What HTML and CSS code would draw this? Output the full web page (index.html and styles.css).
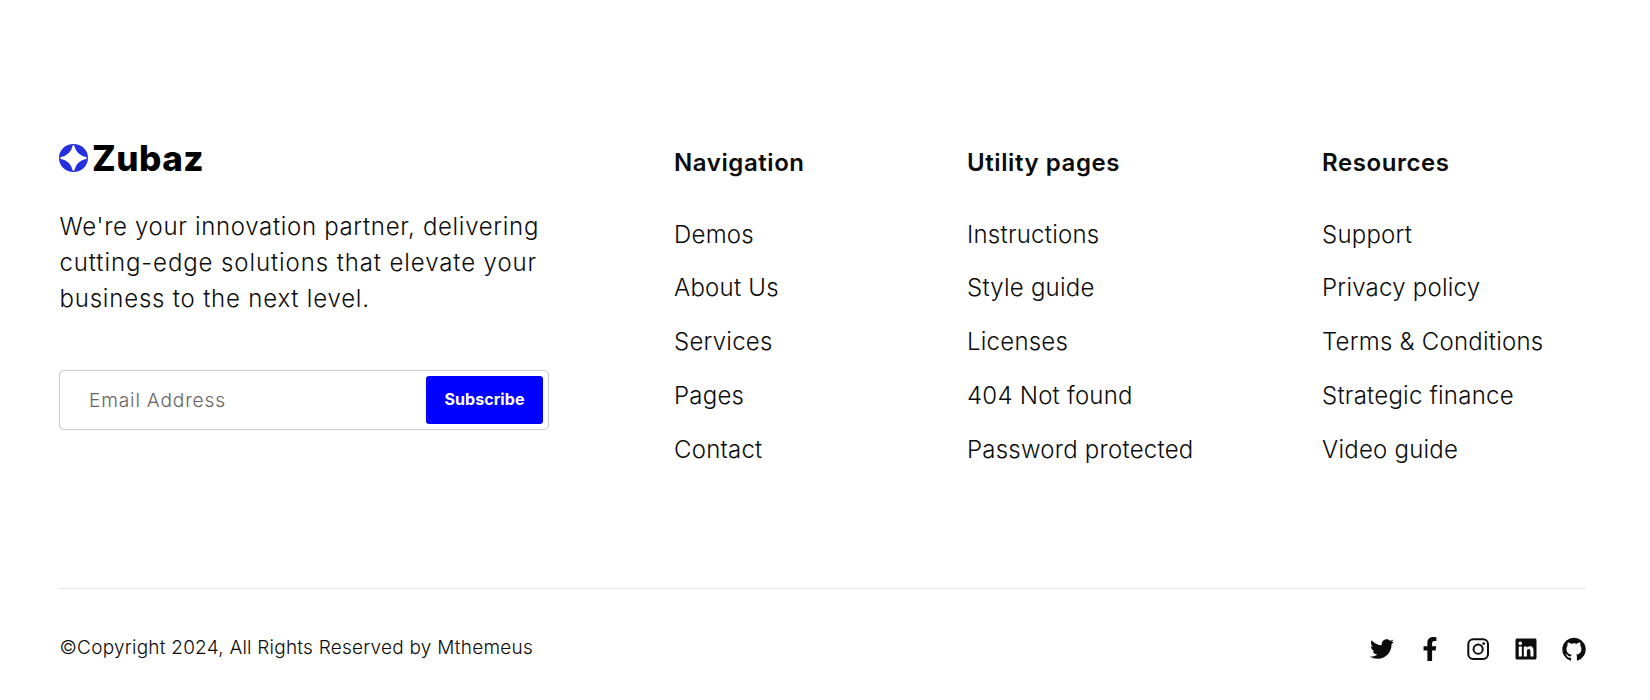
FILE: index.html
```html
<!DOCTYPE html>
<html lang="en">
<head>
<meta charset="utf-8">
<title>Zubaz</title>
<link rel="stylesheet" href="styles.css">
</head>
<body>
<footer class="footer">
  <div class="footer-top">
    <div class="about">
      <a class="brand">
        <svg class="brand-mark" viewBox="0 0 29 28"><ellipse cx="14.5" cy="14" rx="14.5" ry="14" fill="#2430de"/><path d="M14.5 1.500C16 8 20 12.500 27.500 14C20 15.500 16 20 14.500 26.500C13 20 9 15.500 1.500 14C9 12.500 13 8 14.500 1.500Z" fill="#fff" stroke="#fff" stroke-width="1.300"/></svg>
        <span class="brand-name">Zubaz</span>
      </a>
      <p class="intro"><span class="line-a">We're your innovation partner, delivering</span><br><span class="line-b">cutting-edge solutions that elevate your</span><br>business to the next level.</p>
      <form class="subscribe">
        <input class="email" type="email" placeholder="Email Address">
        <button class="submit" type="button">Subscribe</button>
      </form>
    </div>
    <nav class="col col-nav">
      <h2 class="col-title">Navigation</h2>
      <ul class="links"><li>Demos</li><li>About Us</li><li>Services</li><li>Pages</li><li>Contact</li></ul>
    </nav>
    <nav class="col col-utility">
      <h2 class="col-title">Utility pages</h2>
      <ul class="links"><li>Instructions</li><li>Style guide</li><li>Licenses</li><li>404 Not found</li><li>Password protected</li></ul>
    </nav>
    <nav class="col">
      <h2 class="col-title">Resources</h2>
      <ul class="links"><li>Support</li><li>Privacy policy</li><li>Terms &amp; Conditions</li><li>Strategic finance</li><li>Video guide</li></ul>
    </nav>
  </div>
  <div class="footer-bottom">
    <p class="copyright">©Copyright 2024, All Rights Reserved by Mthemeus</p>
    <div class="social">
      <svg class="icon" viewBox="0 0 512 512"><path d="M459.370 151.716c.325 4.548.325 9.097.325 13.645 0 138.720-105.583 298.558-298.558 298.558-59.452 0-114.680-17.219-161.137-47.106 8.447.974 16.568 1.299 25.340 1.299 49.055 0 94.213-16.568 130.274-44.832-46.132-.975-84.792-31.188-98.112-72.772 6.498.974 12.995 1.624 19.818 1.624 9.421 0 18.843-1.300 27.614-3.573-48.081-9.747-84.143-51.980-84.143-102.985v-1.299c13.969 7.797 30.214 12.670 47.431 13.319-28.264-18.843-46.781-51.005-46.781-87.391 0-19.492 5.197-37.360 14.294-52.954 51.655 63.675 129.300 105.258 216.365 109.807-1.624-7.797-2.599-15.918-2.599-24.040 0-57.828 46.782-104.934 104.934-104.934 30.213 0 57.502 12.670 76.670 33.137 23.715-4.548 46.456-13.320 66.599-25.340-7.798 24.366-24.366 44.833-46.132 57.827 21.117-2.273 41.584-8.122 60.426-16.243-14.292 20.791-32.161 39.308-52.628 54.253z"/></svg>
      <svg class="icon" viewBox="0 0 320 512"><path d="M279.140 288l14.220-92.660h-88.910v-60.130c0-25.350 12.420-50.060 52.240-50.060h40.420V6.260S260.430 0 225.360 0c-73.220 0-121.080 44.380-121.080 124.720v70.620H22.890V288h81.390v224h100.170V288z"/></svg>
      <svg class="icon" viewBox="0 0 24 24"><g fill="none" stroke="#0c0c0c" stroke-width="2"><rect x="2.300" y="2.300" width="19.700" height="19.700" rx="5"/><circle cx="12.150" cy="12.150" r="4.600"/></g><circle cx="17.700" cy="6.600" r="1.400"/></svg>
      <svg class="icon" viewBox="0 0 448 512"><path d="M416 32H31.900C14.300 32 0 46.500 0 64.300v383.400C0 465.500 14.300 480 31.900 480H416c17.600 0 32-14.500 32-32.300V64.300c0-17.800-14.400-32.300-32-32.300zM135.400 416H69V202.200h66.500V416zm-33.200-243c-21.300 0-38.500-17.300-38.500-38.500S80.900 96 102.200 96c21.200 0 38.500 17.300 38.500 38.500 0 21.300-17.200 38.500-38.500 38.500zm282.100 243h-66.400V312c0-24.800-.5-56.700-34.500-56.700-34.600 0-39.900 27-39.900 54.900V416h-66.400V202.200h63.700v29.200h.9c8.900-16.800 30.600-34.500 62.900-34.500 67.200 0 79.700 44.300 79.700 101.900V416z"/></svg>
      <svg class="icon" viewBox="0 0 24 24"><path d="M12 .7A11.700 11.700 0 0 0 8.300 23.500c.6.100.8-.3.800-.6v-2.200c-3.300.7-4-1.400-4-1.400-.5-1.400-1.300-1.700-1.300-1.700-1.100-.7.100-.7.100-.7 1.200.1 1.800 1.200 1.800 1.200 1 1.800 2.800 1.300 3.400 1 .1-.8.400-1.300.7-1.600-2.600-.3-5.300-1.300-5.300-5.800 0-1.300.4-2.300 1.200-3.100-.1-.3-.5-1.500.1-3.100 0 0 1-.3 3.200 1.200a11 11 0 0 1 5.900 0c2.200-1.500 3.200-1.200 3.200-1.200.6 1.600.2 2.800.1 3.100.8.800 1.200 1.900 1.200 3.100 0 4.500-2.700 5.500-5.300 5.800.4.400.8 1.100.8 2.200v3.200c0 .3.200.7.800.6A11.700 11.700 0 0 0 12 .7z"/></svg>
    </div>
  </div>
</footer>
</body>
</html>
```
FILE: styles.css
```css
* { box-sizing: border-box; margin: 0; padding: 0; }
body { background: #fff; color: #0c0c0c; font-family: Inter, sans-serif; }
.footer { width: 1650px; height: 700px; padding: 143px 64px 0 59px; }
.footer-top { display: flex; height: 445px; }
.about { width: 615px; }
.brand { display: flex; height: 30px; gap: 4px; }
.brand-mark { width: 29px; height: 28px; margin-top: 1px; }
.brand-name { font-size: 35px; line-height: 30px; font-weight: 800; letter-spacing: .5px; color: #000; }
.intro { margin: 36px 0 0 .5px; font-size: 24px; line-height: 36px; font-weight: 300; letter-spacing: .8px; white-space: nowrap; }
.line-a { letter-spacing: .67px; }
.line-b { letter-spacing: .9px; }
.subscribe { display: flex; justify-content: space-between; width: 490px; height: 60px; margin-top: 53px; padding: 5px; border: 1px solid #ccc; border-radius: 4px; }
.email { width: 340px; padding: 0 0 1px 24px; border: 0; outline: 0; background: none; font: 300 19.2px Inter, sans-serif; letter-spacing: .8px; }
.email::placeholder { color: #666; }
.submit { width: 117px; height: 48px; padding-bottom: 2px; border: 0; border-radius: 3px; background: #00f; color: #fff; font: 700 16px Inter, sans-serif; letter-spacing: .05px; }
.col-nav { width: 293px; }
.col-utility { width: 355px; }
.col-title { margin-top: 2px; font-size: 24px; line-height: 36px; font-weight: 600; letter-spacing: .58px; }
.links { margin-top: 26.600px; list-style: none; font-size: 24px; line-height: 53.8px; font-weight: 300; letter-spacing: .23px; }
.footer-bottom { display: flex; justify-content: space-between; border-top: 1px solid #e5e5e5; }
.copyright { margin: 44px 0 0 .5px; font-size: 19px; line-height: 30px; font-weight: 300; letter-spacing: .23px; }
.social { display: flex; gap: 24px; margin-top: 48px; }
.icon { width: 24px; height: 24px; fill: #0c0c0c; }
```
